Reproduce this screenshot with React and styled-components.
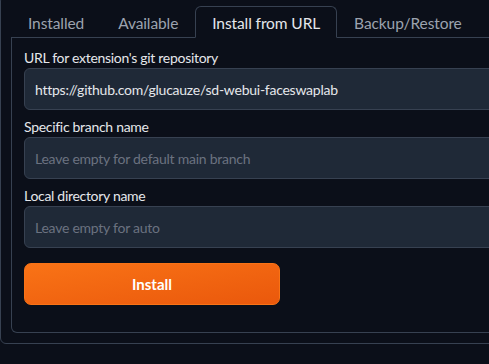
import React from 'react';
import styled, { createGlobalStyle } from 'styled-components';

const GlobalStyle = createGlobalStyle`
	html, body {
		margin: 0;
		padding: 0;
		background: #0b0f19;
		overflow: hidden;
	}
	body {
		font-family: Lato, "Liberation Sans", sans-serif;
		color: #e5e7eb;
	}
`;

const Block = styled.div`
	width: 560px;
	margin-top: -5px;
	padding: 10px;
	border: 1px solid #374151;
	border-radius: 6px;
	box-sizing: border-box;
`;

const TabBar = styled.div`
	display: flex;
	border-bottom: 1px solid #374151;
`;

const Tab = styled.button`
	font-family: inherit;
	font-size: 15.5px;
	line-height: 22px;
	letter-spacing: -0.1px;
	padding: 5px 16px 3px;
	margin-bottom: -1px;
	background: ${(p) => (p.$active ? '#0b0f19' : 'transparent')};
	color: ${(p) => (p.$active ? '#e5e7eb' : '#9ca3af')};
	border: 1px solid ${(p) => (p.$active ? '#374151' : 'transparent')};
	border-bottom-color: ${(p) => (p.$active ? '#0b0f19' : 'transparent')};
	border-radius: 6px 6px 0 0;
	cursor: pointer;
`;

const Panel = styled.div`
	display: flex;
	flex-direction: column;
	gap: 8px;
	padding: 11px 12px 27px;
	border: 1px solid #374151;
	border-top: none;
	border-radius: 0 0 6px 6px;
`;

const Field = styled.label`
	display: flex;
	flex-direction: column;
`;

const Label = styled.span`
	font-size: 14px;
	line-height: 18px;
	letter-spacing: -0.3px;
	margin-bottom: 1px;
	color: #e5e7eb;
`;

const Input = styled.input`
	height: 42px;
	box-sizing: border-box;
	padding: 0 10px;
	font-family: inherit;
	font-size: 14px;
	letter-spacing: -0.25px;
	color: #e5e7eb;
	background: #1f2937;
	border: 1px solid #374151;
	border-radius: 6px;
	outline: none;

	&::placeholder {
		color: #6b7280;
	}
`;

const Button = styled.button`
	width: 256px;
	height: 42px;
	margin-top: 7px;
	font-family: inherit;
	font-size: 15px;
	font-weight: 700;
	color: #fff;
	background: linear-gradient(to bottom right, #f97316, #ea580c);
	border: 1px solid #f97316;
	border-radius: 7px;
	cursor: pointer;
`;

const tabs = ['Installed', 'Available', 'Install from URL', 'Backup/Restore'];

const App = () => {
	return (
		<>
			<GlobalStyle />
			<Block>
				<TabBar>
					{tabs.map((t) => (
						<Tab key={t} $active={t === 'Install from URL'}>
							{t}
						</Tab>
					))}
				</TabBar>
				<Panel>
					<Field>
						<Label>URL for extension's git repository</Label>
						<Input defaultValue='https://github.com/glucauze/sd-webui-faceswaplab' />
					</Field>
					<Field>
						<Label>Specific branch name</Label>
						<Input placeholder='Leave empty for default main branch' />
					</Field>
					<Field>
						<Label>Local directory name</Label>
						<Input placeholder='Leave empty for auto' />
					</Field>
					<div>
						<Button>Install</Button>
					</div>
				</Panel>
			</Block>
		</>
	);
};

export default App;
